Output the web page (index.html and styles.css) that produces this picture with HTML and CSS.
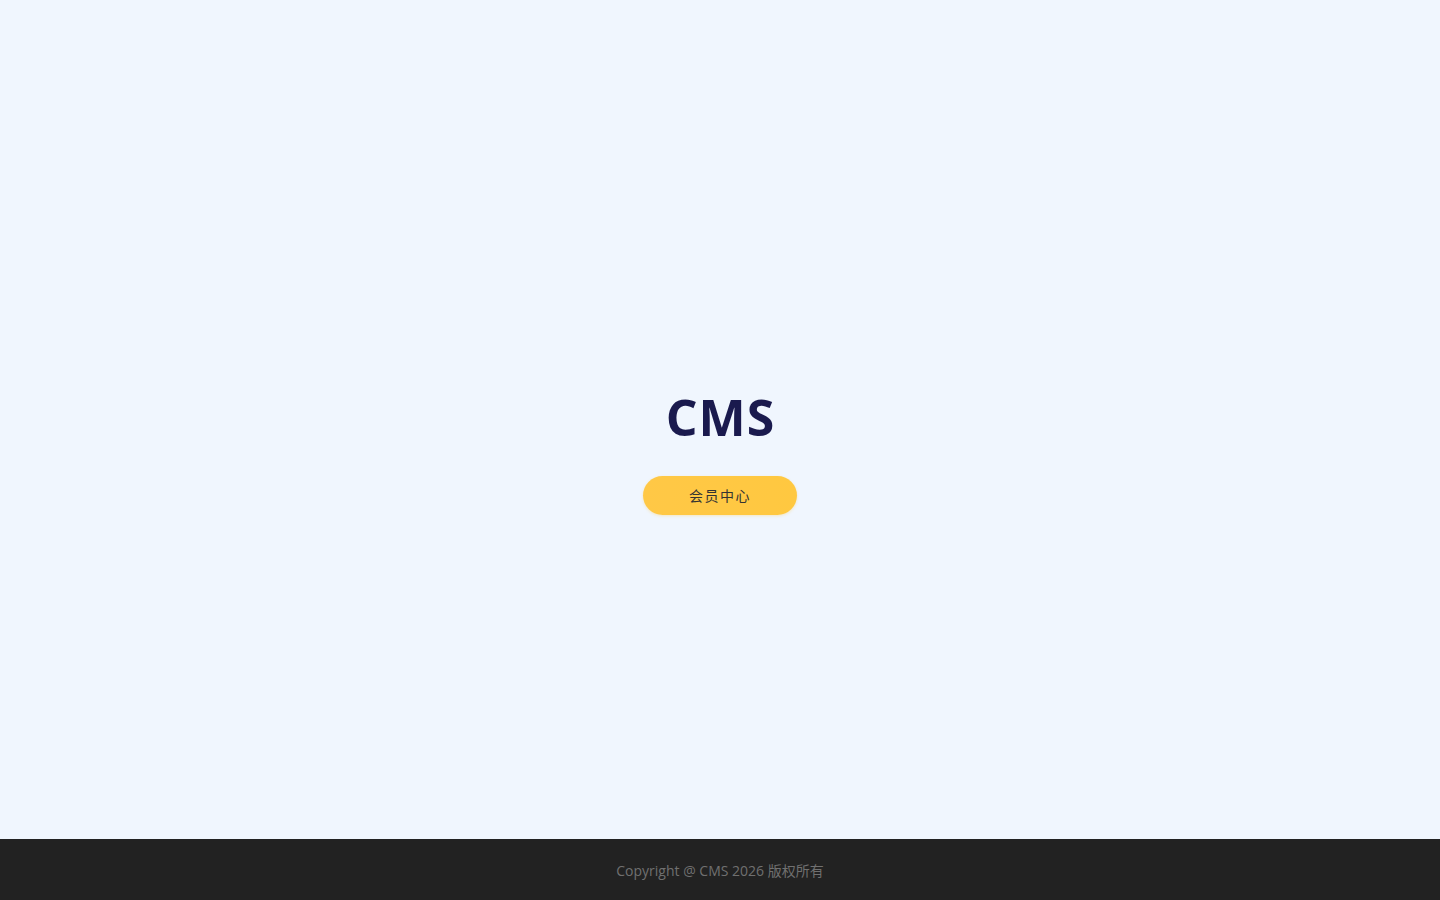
FILE: index.html
```html
<!DOCTYPE html>
<html lang="zh-CN">
<head>
<meta charset="utf-8">
<title>CMS</title>
<link rel="stylesheet" href="styles.css">
</head>
<body>
<main class="hero">
  <h1 class="title">CMS</h1>
  <a class="btn" href="#">会员中心</a>
</main>
<footer class="footer">Copyright @ CMS 2026 版权所有</footer>
</body>
</html>
```
FILE: styles.css
```css
html, body {
  margin: 0;
  padding: 0;
}
body {
  background: #f0f6fe;
  font-family: "Open Sans", "Noto Sans CJK SC", sans-serif;
}
.hero {
  height: 839px;
  box-sizing: border-box;
  display: flex;
  flex-direction: column;
  align-items: center;
  justify-content: center;
  padding-top: 61px;
}
.title {
  margin: 0 0 27px;
  font-size: 50px;
  line-height: 64px;
  font-weight: 700;
  color: #1a1a4e;
  letter-spacing: 1px;
  padding-left: 1px;
}
.btn {
  display: flex;
  align-items: center;
  justify-content: center;
  width: 154px;
  height: 39px;
  border-radius: 20px;
  background: linear-gradient(90deg, #ffc846, #ffc840);
  color: #333;
  font-family: "Noto Sans CJK SC", sans-serif;
  font-size: 14px;
  letter-spacing: 1.5px;
  line-height: 1;
  padding-bottom: 2px;
  box-sizing: border-box;
  text-decoration: none;
  box-shadow: 0 1px 3px rgba(255, 200, 60, 0.3);
}
.footer {
  height: 61px;
  background: #222222;
  color: #707070;
  font-size: 14px;
  display: flex;
  align-items: center;
  justify-content: center;
  font-family: "Open Sans", "Noto Sans CJK SC", sans-serif;
}
```
